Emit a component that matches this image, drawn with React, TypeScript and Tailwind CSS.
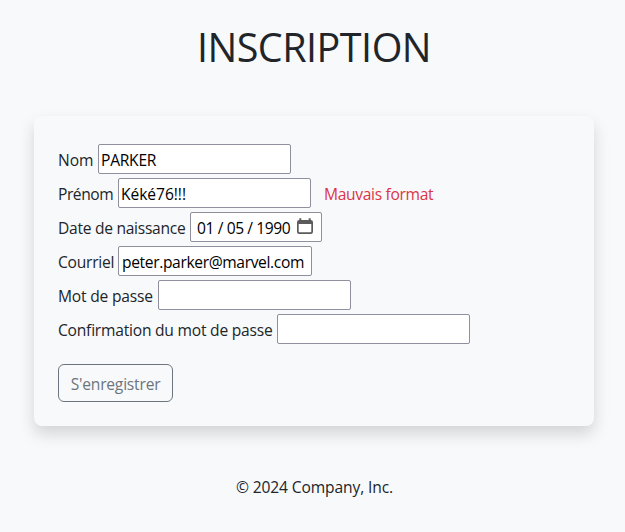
import type { ReactNode } from 'react';

const field =
  'h-[30px] rounded-[2px] border border-[#8f8f9d] bg-white text-black outline-none';

function Row({ label, width, tracking, children }: { label: string; width: string; tracking: string; children: ReactNode }) {
  return (
    <div className="flex h-[34px] items-center">
      <label className={`shrink-0 whitespace-nowrap pt-px ${width} ${tracking}`}>{label}</label>
      {children}
    </div>
  );
}

function CalendarIcon() {
  return (
    <svg width="16" height="17" viewBox="0 0 16 17" className="mb-[2px] shrink-0">
      <path
        fill="#5b5b5b"
        fillRule="evenodd"
        d="M2.3 0.3h2V2h7.4V0.3h2V2h.1A2.2 2.2 0 0 1 16 4.2v9.6a2.2 2.2 0 0 1-2.2 2.2H2.2A2.2 2.2 0 0 1 0 13.8V4.2A2.2 2.2 0 0 1 2.2 2h.1zM1.7 6v7.3c0 .6.4 1 1 1h10.6c.6 0 1-.4 1-1V6z"
      />
    </svg>
  );
}

export default function App() {
  return (
    <div className="flex h-[532px] w-full flex-col items-center overflow-hidden bg-[#f8f9fb] font-['Open_Sans','Noto_Sans',sans-serif] text-[15.6px] leading-6 text-[#212529]">
      <h1 className="mt-[23px] mr-[-3px] h-12 whitespace-nowrap text-[39.5px] leading-[48px] tracking-[-0.5px]">INSCRIPTION</h1>
      <form
        className="mt-[45px] mr-[-3px] h-[310px] w-[560px] shrink-0 rounded-lg p-6 pt-[26px] shadow-[0_8px_16px_rgba(0,0,0,0.15)] bg-[#f8f9fb]"
        onSubmit={(e) => e.preventDefault()}
      >
        <Row label="Nom" width="w-[40px]" tracking="tracking-[-0.1px]">
          <input className={`${field} w-[193px] pt-[2px] pl-[2px] tracking-[-0.25px]`} defaultValue="PARKER" />
        </Row>
        <Row label="Prénom" width="w-[60px]" tracking="tracking-[-0.45px]">
          <input className={`${field} w-[193px] pt-[2px] pl-[2px] tracking-[-0.05px]`} defaultValue="Kéké76!!!" />
          <span className="ml-[13px] pt-px tracking-[-0.32px] text-[#dc3545]">Mauvais format</span>
        </Row>
        <Row label="Date de naissance" width="w-[132px]" tracking="tracking-[-0.28px]">
          <div className={`${field} flex w-[132px] items-center justify-between pr-2 pl-[6px]`}>
            <span className="whitespace-pre pt-[2px] tracking-[-0.4px]">01 / 05 / 1990</span>
            <CalendarIcon />
          </div>
        </Row>
        <Row label="Courriel" width="w-[60px]" tracking="tracking-[-0.25px]">
          <input className={`${field} w-[194px] pt-[2px] pl-[3px] tracking-[-0.36px]`} defaultValue="peter.parker@marvel.com" />
        </Row>
        <Row label="Mot de passe" width="w-[100px]" tracking="tracking-[-0.2px]">
          <input type="password" className={`${field} w-[193px]`} />
        </Row>
        <Row label="Confirmation du mot de passe" width="w-[219px]" tracking="tracking-[-0.22px]">
          <input type="password" className={`${field} w-[193px]`} />
        </Row>
        <button className="mt-[18px] flex h-[38px] w-[115px] items-center justify-center whitespace-nowrap rounded-md border border-[#6c757d] pt-[2px] tracking-[-0.2px] text-[#6c757d]">
          S'enregistrer
        </button>
      </form>
      <footer className="mt-[49px] mr-[-4px] tracking-[-0.12px]">© 2024 Company, Inc.</footer>
    </div>
  );
}
